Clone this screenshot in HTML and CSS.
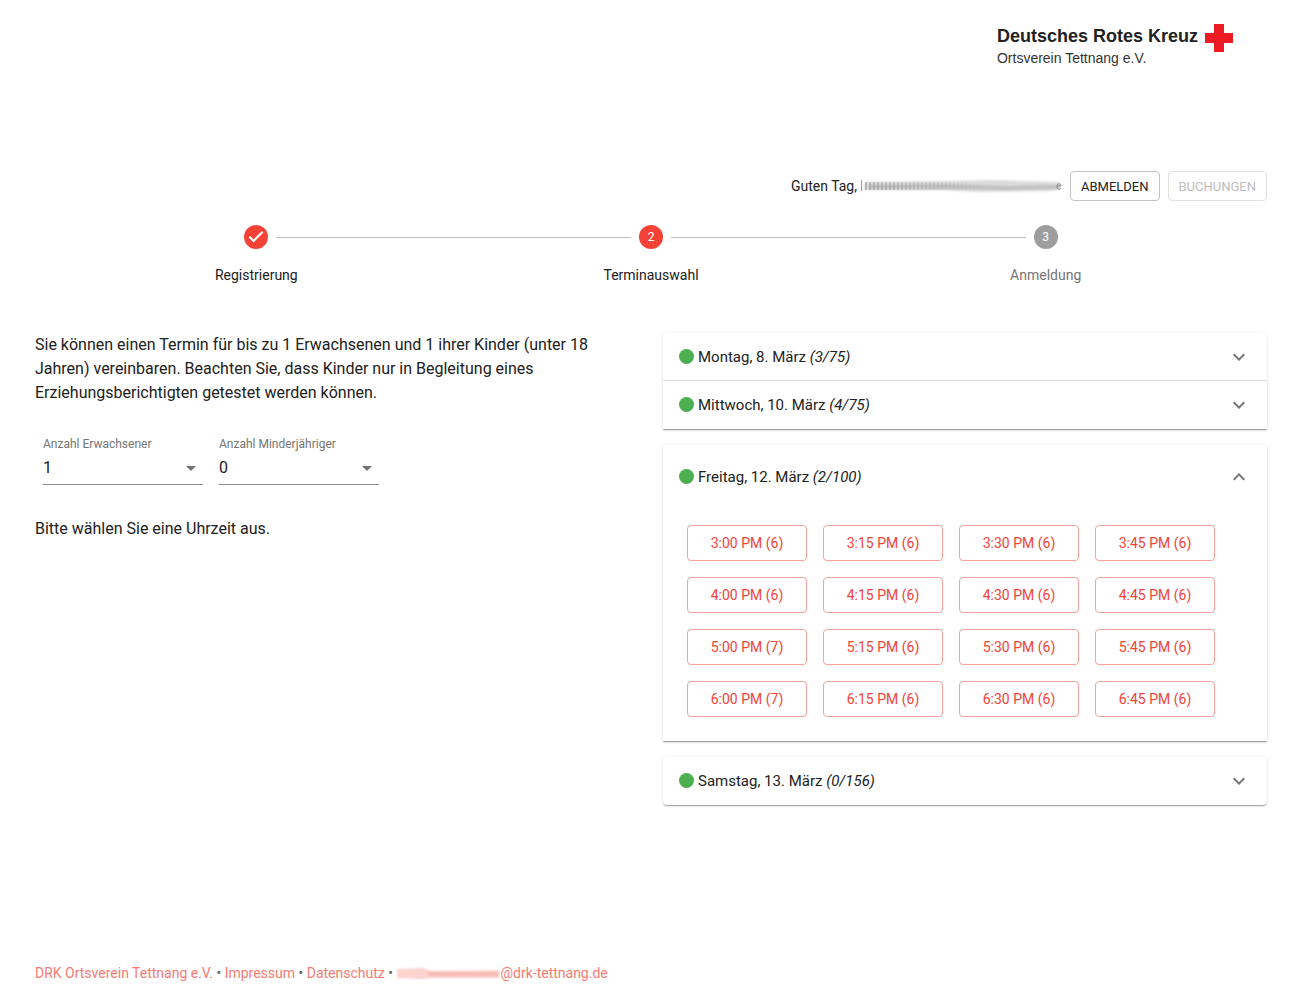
FILE: index.html
```html
<!DOCTYPE html>
<html lang="de">
<head>
<meta charset="utf-8">
<meta name="viewport" content="width=device-width, initial-scale=1">
<title>Terminauswahl – DRK Ortsverein Tettnang e.V.</title>
<link rel="stylesheet" href="styles.css">
</head>
<body>
<svg class="sprite" aria-hidden="true">
  <symbol id="chevron" viewBox="0 0 24 24"><path d="M16.59 8.59L12 13.17 7.41 8.59 6 10l6 6 6-6z"/></symbol>
  <symbol id="caret" viewBox="0 0 24 24"><path d="M7 10l5 5 5-5z"/></symbol>
</svg>
<div class="page">
  <header class="brand">
    <div class="brand-text">
      <strong class="brand-name">Deutsches Rotes Kreuz</strong>
      <span class="brand-sub">Ortsverein Tettnang e.V.</span>
    </div>
    <svg class="brand-cross" viewBox="0 0 28 28" role="img" aria-label="Rotes Kreuz"><path fill="#ed1c24" d="M9 0h10v9h9v10h-9v9H9v-9H0V9h9z"/></svg>
  </header>

  <div class="userbar">
    <span>Guten Tag,</span>
    <svg class="redacted-name" viewBox="0 0 201 16" aria-hidden="true">
      <defs>
        <pattern id="stripes" width="4" height="16" patternUnits="userSpaceOnUse"><path fill="#888" opacity=".45" d="M0 0h2v16H0z"/></pattern>
        <linearGradient id="fadeout"><stop offset="0" stop-color="#fff"/><stop offset="1" stop-color="#fff" stop-opacity="0"/></linearGradient>
        <mask id="fademask"><path fill="url(#fadeout)" d="M0 0h120v16H0z"/></mask>
        <filter id="soft" x="-5%" y="-30%" width="110%" height="160%"><feGaussianBlur stdDeviation="1"/></filter>
      </defs>
      <path fill="#dcdcdc" filter="url(#soft)" d="M3 4l82-1 45-1 69 2v7l-10 2-70 1-40-2-76 0z"/>
      <path fill="#b4b4b4" opacity=".7" filter="url(#soft)" d="M8 7l76-1 60 2 54-1v4l-54 1-60-1H8z"/>
      <path fill="url(#stripes)" mask="url(#fademask)" d="M2 4h118v8H2z"/>
      <path fill="#999" d="M0 2h1v11H0z"/>
      <path fill="none" stroke="#888" d="M196 8h4c0-3-4-3-4 0 0 4 3 4 4 2"/>
    </svg>
    <button class="btn btn-small" type="button">ABMELDEN</button>
    <button class="btn btn-small" type="button" disabled>BUCHUNGEN</button>
  </div>

  <ol class="stepper">
    <li class="step">
      <div class="step-track"><span class="step-icon"><svg class="step-check" viewBox="0 0 24 24" aria-hidden="true"><path fill="#fff" d="M9.6 17.4L4.600 12.400l1.500-1.500 3.500 3.500 8.300-8.300 1.500 1.500z"/></svg></span></div>
      <span class="step-label">Registrierung</span>
    </li>
    <li class="step" aria-current="step">
      <div class="step-track"><span class="step-icon">2</span></div>
      <span class="step-label">Terminauswahl</span>
    </li>
    <li class="step step-pending">
      <div class="step-track"><span class="step-icon">3</span></div>
      <span class="step-label">Anmeldung</span>
    </li>
  </ol>

  <main class="columns">
    <section class="intro">
      <p>Sie können einen Termin für bis zu 1 Erwachsenen und 1 ihrer Kinder (unter 18 Jahren) vereinbaren. Beachten Sie, dass Kinder nur in Begleitung eines Erziehungsberichtigten getestet werden können.</p>
      <div class="fields">
        <div class="field">
          <label for="adults">Anzahl Erwachsener</label>
          <div class="select">
            <select id="adults"><option>0</option><option selected>1</option></select>
            <svg class="select-icon" aria-hidden="true"><use href="#caret"/></svg>
          </div>
        </div>
        <div class="field">
          <label for="minors">Anzahl Minderjähriger</label>
          <div class="select">
            <select id="minors"><option selected>0</option><option>1</option></select>
            <svg class="select-icon" aria-hidden="true"><use href="#caret"/></svg>
          </div>
        </div>
      </div>
      <p>Bitte wählen Sie eine Uhrzeit aus.</p>
    </section>

    <section class="days">
      <details class="day">
        <summary><span class="dot"></span><span class="day-name">Montag, 8. März <em>(3/75)</em></span><svg class="chevron" aria-hidden="true"><use href="#chevron"/></svg></summary>
      </details>
      <details class="day">
        <summary><span class="dot"></span><span class="day-name">Mittwoch, 10. März <em>(4/75)</em></span><svg class="chevron" aria-hidden="true"><use href="#chevron"/></svg></summary>
      </details>
      <details class="day" open>
        <summary><span class="dot"></span><span class="day-name">Freitag, 12. März <em>(2/100)</em></span><svg class="chevron" aria-hidden="true"><use href="#chevron"/></svg></summary>
        <div class="slots">
          <button class="btn btn-slot" type="button">3:00 PM (6)</button>
          <button class="btn btn-slot" type="button">3:15 PM (6)</button>
          <button class="btn btn-slot" type="button">3:30 PM (6)</button>
          <button class="btn btn-slot" type="button">3:45 PM (6)</button>
          <button class="btn btn-slot" type="button">4:00 PM (6)</button>
          <button class="btn btn-slot" type="button">4:15 PM (6)</button>
          <button class="btn btn-slot" type="button">4:30 PM (6)</button>
          <button class="btn btn-slot" type="button">4:45 PM (6)</button>
          <button class="btn btn-slot" type="button">5:00 PM (7)</button>
          <button class="btn btn-slot" type="button">5:15 PM (6)</button>
          <button class="btn btn-slot" type="button">5:30 PM (6)</button>
          <button class="btn btn-slot" type="button">5:45 PM (6)</button>
          <button class="btn btn-slot" type="button">6:00 PM (7)</button>
          <button class="btn btn-slot" type="button">6:15 PM (6)</button>
          <button class="btn btn-slot" type="button">6:30 PM (6)</button>
          <button class="btn btn-slot" type="button">6:45 PM (6)</button>
        </div>
      </details>
      <details class="day">
        <summary><span class="dot"></span><span class="day-name">Samstag, 13. März <em>(0/156)</em></span><svg class="chevron" aria-hidden="true"><use href="#chevron"/></svg></summary>
      </details>
    </section>
  </main>

  <footer class="footer">
    <a href="#">DRK Ortsverein Tettnang e.V.</a> • <a href="#">Impressum</a> • <a href="#">Datenschutz</a> • <a href="#"><svg class="redacted-mail" viewBox="0 0 104 16" aria-hidden="true"><path fill="#fbd3cf" filter="url(#soft)" d="M1 3l26-1 8 3 68-1v8l-68 0-8 1-26-1z"/><path fill="#f7b0a9" opacity=".7" filter="url(#soft)" d="M30 6h73v4H34z"/></svg>@drk-tettnang.de</a>
  </footer>
</div>
</body>
</html>
```

FILE: styles.css
```css
* {
  box-sizing: border-box;
}

body {
  margin: 0;
  background: #fff;
  color: #212121;
  font: 16px/24px Roboto, "Liberation Sans", sans-serif;
}

.sprite {
  display: none;
}

.page {
  display: flex;
  flex-direction: column;
  min-height: 100vh;
  padding: 24px 37px 23px 35px;
}

/* Header */
.brand {
  display: flex;
  justify-content: flex-end;
  gap: 7px;
  padding-right: 34px;
  font-family: "Liberation Sans", Arial, sans-serif;
}

.brand-text {
  display: flex;
  flex-direction: column;
}

.brand-name {
  font-size: 18px;
}

.brand-sub {
  color: #333;
  font-size: 14px;
  line-height: 20px;
}

.brand-cross {
  width: 28px;
  height: 28px;
}

.userbar {
  display: flex;
  justify-content: flex-end;
  align-items: center;
  gap: 8px;
  margin-top: 103px;
  font-size: 14px;
}

.redacted-name {
  width: 201px;
  height: 16px;
  margin-left: -4px;
}

/* Buttons */
.btn {
  border: 1px solid #c4c4c4;
  border-radius: 4px;
  background: none;
  color: #212121;
  font-family: inherit;
  cursor: pointer;
}

.btn-small {
  height: 30px;
  padding: 0 10px;
  font-size: 13px;
}

.btn:disabled {
  border-color: #e0e0e0;
  color: #bdbdbd;
  cursor: default;
}

.btn-slot {
  height: 36px;
  border-color: #f9a19a;
  color: #f44336;
  font-size: 14px;
}

/* Stepper */
.stepper {
  display: flex;
  margin: 24px 0 0;
  padding: 0 24px;
  list-style: none;
}

.step {
  flex: 1;
  font-size: 14px;
  line-height: 20px;
  text-align: center;
}

.step-track {
  display: flex;
  align-items: center;
  gap: 8px;
  margin-bottom: 16px;
}

.step-track::before,
.step-track::after {
  content: "";
  flex: 1;
  height: 1px;
  background: #bdbdbd;
}

.step:first-child .step-track::before,
.step:last-child .step-track::after {
  background: none;
}

.step-icon {
  display: grid;
  place-items: center;
  width: 24px;
  height: 24px;
  border-radius: 50%;
  background: #f44336;
  color: #fff;
  font-size: 12px;
}

.step-check {
  width: 24px;
  height: 24px;
}

.step-pending .step-icon {
  background: #9e9e9e;
}

.step-pending .step-label {
  color: #757575;
}

/* Content */
.columns {
  display: grid;
  grid-template-columns: 1fr 1fr;
  gap: 24px;
  align-items: start;
  margin-top: 48px;
}

.intro p {
  margin: 0;
}

.fields {
  display: flex;
  gap: 16px;
  margin: 32px 8px;
}

.field {
  width: 160px;
}

.field label {
  display: block;
  color: #757575;
  font-size: 12px;
  line-height: 14px;
}

.select {
  display: grid;
  align-items: center;
  border-bottom: 1px solid #8c8c8c;
}

.select select {
  grid-area: 1 / 1;
  width: 100%;
  height: 33px;
  padding: 0 24px 0 0;
  border: 0;
  appearance: none;
  background: none;
  color: inherit;
  font: inherit;
}

.select-icon {
  grid-area: 1 / 1;
  justify-self: end;
  width: 24px;
  height: 24px;
  fill: #757575;
  pointer-events: none;
}

/* Days */
.day {
  background: #fff;
  box-shadow: 0 2px 1px -1px rgba(0, 0, 0, 0.2), 0 1px 1px rgba(0, 0, 0, 0.14), 0 1px 3px rgba(0, 0, 0, 0.12);
}

.day:first-child {
  border-radius: 4px 4px 0 0;
}

.day:last-child {
  border-radius: 0 0 4px 4px;
}

.day[open] {
  margin: 16px 0;
}

.day summary {
  display: flex;
  align-items: center;
  height: 48px;
  padding: 0 16px;
  font-size: 15px;
  list-style: none;
  cursor: pointer;
}

.day:not([open]):has(+ .day:not([open])) summary {
  border-bottom: 1px solid #e0e0e0;
}

.day[open] summary {
  height: 64px;
}

.dot {
  width: 15px;
  height: 15px;
  margin: 0 4px 1px 0;
  border-radius: 50%;
  background: #4caf50;
}

.day-name {
  flex: 1;
}

.chevron {
  width: 24px;
  height: 24px;
  fill: #757575;
}

.day[open] .chevron {
  transform: rotate(180deg);
}

.slots {
  display: grid;
  grid-template-columns: repeat(auto-fill, 120px);
  gap: 16px;
  padding: 16px 24px 24px;
}

/* Footer */
.footer {
  margin-top: auto;
  padding-top: 24px;
  color: #616161;
  font-size: 14px;
  line-height: 20px;
}

.footer a {
  color: #f77b72;
  text-decoration: none;
}

.redacted-mail {
  width: 104px;
  height: 16px;
  vertical-align: middle;
}
```
